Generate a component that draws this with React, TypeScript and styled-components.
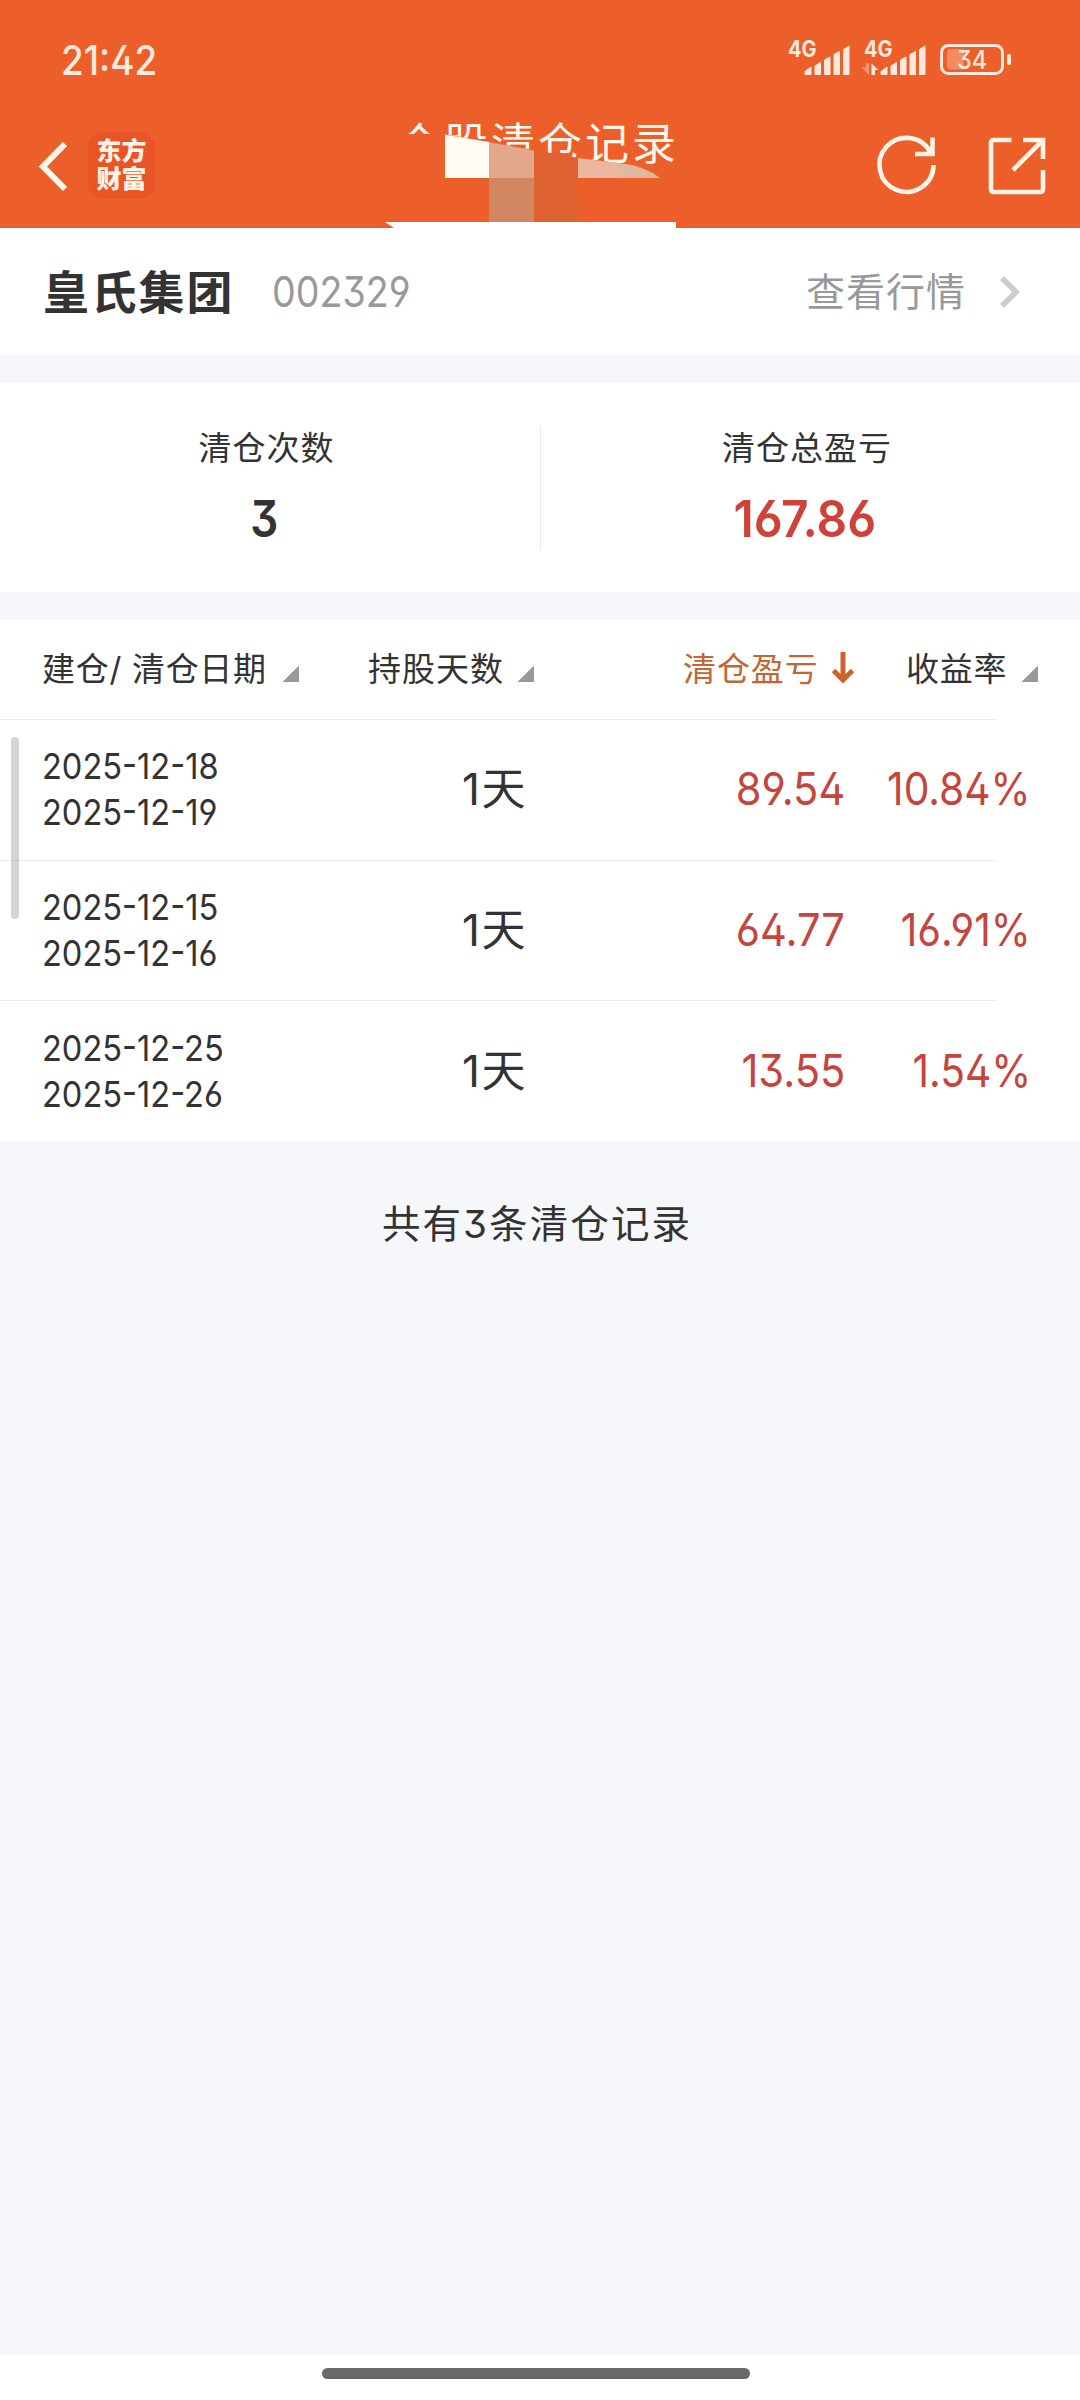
import React from 'react';
import styled, { createGlobalStyle } from 'styled-components';

const Global = createGlobalStyle`
  *, *::before, *::after { box-sizing: border-box; }
  html, body { margin: 0; padding: 0; background: #f6f7fa; }
  body { font-family: Inter, "Noto Sans CJK SC", sans-serif; color: #333; }
`;

const Screen = styled.main`
  width: 1080px;
  height: 2400px;
  display: flex;
  flex-direction: column;
  background: #f6f7fa;
  position: relative;
  overflow: hidden;
`;

/* Text with its own optical width: squeeze keeps the digits as narrow as the phone's typeface. */
const Txt = styled.span<{
  $size: number; $color?: string; $weight?: number; $gap?: number; $squeeze?: number; $origin?: string; $line?: number;
}>`
  display: inline-block;
  white-space: pre;
  font-size: ${p => p.$size}px;
  line-height: ${p => p.$line ?? 48}px;
  color: ${p => p.$color ?? '#333'};
  font-weight: ${p => p.$weight ?? 400};
  letter-spacing: ${p => p.$gap ?? 0}px;
  font-feature-settings: "ss01" 1, "cv09" 1;
  transform: scaleX(${p => p.$squeeze ?? 1});
  transform-origin: ${p => p.$origin ?? 'left'} center;
`;

const Top = styled.header`
  height: 228px;
  flex: none;
  background: #ec5f2b;
  position: relative;
`;

const StatusBar = styled.div`
  height: 104px;
  display: flex;
  justify-content: space-between;
  padding: 36px 68px 0 61px;
`;

const NavBar = styled.nav`
  height: 124px;
  display: flex;
  align-items: flex-start;
  padding: 28px 34px 0 39px;
`;

const Back = styled.svg`
  margin-top: 9px;
  flex: none;
`;

const Logo = styled.div`
  width: 67px;
  height: 67px;
  margin-left: 20px;
  padding-top: 5px;
  border-radius: 15px;
  background: #ea5527;
  color: #fff3e6;
  font-size: 25px;
  font-weight: 900;
  line-height: 28px;
  text-align: center;
`;

const Title = styled.h1`
  margin: -18px 0 0 242px;
  font-size: 44px;
  font-weight: 400;
  line-height: 60px;
  letter-spacing: 3px;
  color: #fff6ea;
  white-space: nowrap;
`;

const NavIcons = styled.svg`
  margin-left: auto;
  flex: none;
`;

const Mosaic = styled.svg`
  position: absolute;
  left: 380px;
  top: 120px;
`;

const StockRow = styled.section`
  height: 127px;
  flex: none;
  display: flex;
  align-items: center;
  padding: 0 59px 0 43px;
  background: #fff;
`;

const Code = styled.div`
  margin-left: 38px;
  flex: 1;
`;

const Chevron = styled.svg`
  margin-left: 33px;
`;

const Summary = styled.section`
  height: 209px;
  flex: none;
  margin-top: 28px;
  display: grid;
  grid-template-columns: 540px 1px 539px;
  align-items: center;
  background: #fff;
`;

const Stat = styled.div`
  height: 209px;
  padding: 41px 7px 0 0;
  display: flex;
  flex-direction: column;
  align-items: center;
  gap: 23px;
`;

const StatValue = styled.div`
  padding-right: 4px;
`;

const Divider = styled.div`
  height: 124px;
  background: #ebebeb;
`;

const Table = styled.section`
  margin-top: 28px;
  flex: none;
  background: #fff;
  position: relative;
`;

const HeadRow = styled.div`
  height: 99px;
  display: grid;
  grid-template-columns: 326px 315px 223px 174px;
  padding-left: 42px;
`;

const HeadCell = styled.div`
  display: flex;
  align-items: flex-start;
  padding-top: 25px;
`;

const Triangle = styled.i<{ $left: number }>`
  width: 16px;
  height: 16px;
  margin: 21px 0 0 ${p => p.$left}px;
  background: linear-gradient(135deg, transparent 50%, #999 50%);
`;

const Arrow = styled.svg`
  margin: 6px 0 0 13px;
`;

const Row = styled.div`
  height: 140.67px;
  display: grid;
  grid-template-columns: 369px 237px 248px minmax(0, 1fr);
  align-items: center;
  padding: 0 0 0 42px;
  background: linear-gradient(#ececec, #ececec) 0 0 / 996px 1px no-repeat;
`;

const Dates = styled.div`
  display: flex;
  flex-direction: column;
`;

const Days = styled.div`
  padding-left: 51px;
`;

const Amount = styled.div<{ $inset: number }>`
  display: flex;
  justify-content: flex-end;
  padding-right: ${p => p.$inset}px;
`;

const ScrollThumb = styled.div`
  position: absolute;
  left: 11px;
  top: 117px;
  width: 8px;
  height: 182px;
  border-radius: 4px;
  background: rgba(0, 0, 0, 0.17);
`;

const Total = styled.p`
  margin: 59px 0 0;
  padding-right: 6px;
  text-align: center;
`;

const HomeArea = styled.footer`
  height: 45px;
  margin-top: auto;
  padding-top: 13px;
  background: #fff;
`;

const HomePill = styled.div`
  width: 428px;
  height: 11px;
  margin-left: 322px;
  border-radius: 6px;
  background: #696969;
`;

const RED = '#c4453d';
const CREAM = '#ffe9dc';

const rows = [
  { open: '2025-12-18', close: '2025-12-19', profit: '89.54', rate: '10.84%' },
  { open: '2025-12-15', close: '2025-12-16', profit: '64.77', rate: '16.91%' },
  { open: '2025-12-25', close: '2025-12-26', profit: '13.55', rate: '1.54%' },
];

const Bars = ({ x }: { x: number }) => (
  <g fill={CREAM} stroke={CREAM} strokeWidth="1" strokeLinejoin="round">
    <path d={`M${x + 0.5} 38.500 v-3 l6 -4.500 v7.500z`} />
    <path d={`M${x + 10.5} 38.500 v-8.500 l5.500 -3.500 v12z`} />
    <path d={`M${x + 20} 38.500 v-14.500 l5.500 -3 v17.500z`} />
    <path d={`M${x + 29.5} 38.500 v-20 l5.500 -3 v23z`} />
    <path d={`M${x + 39} 38.500 v-25 l5.500 -3.500 v28.500z`} />
  </g>
);

const StatusIcons = () => (
  <svg width="226" height="48" viewBox="0 0 226 48" fontFamily="Inter, sans-serif">
    <text x="2" y="21" fontSize="22.500" fontWeight="700" fill={CREAM} textLength="28.500" lengthAdjust="spacingAndGlyphs">4G</text>
    <Bars x={18.5} />
    <text x="78" y="21" fontSize="22.500" fontWeight="700" fill={CREAM} textLength="28.500" lengthAdjust="spacingAndGlyphs">4G</text>
    <path d="M80 27.500 h3 v11.500 l-7.500 -7.500 h4.500z" fill="#f79a74" />
    <path d="M85.500 39 v-11.500 l7 6.500 h-3.500 v5z" fill={CREAM} />
    <Bars x={94.5} />
    <path d="M165 13 h13 v20.500 h-13 q-4 0 -4 -4 v-12.500 q0 -4 4 -4z" fill="#f48a62" />
    <rect x="155.500" y="9.500" width="61" height="28" rx="7" fill="none" stroke={CREAM} strokeWidth="3" />
    <rect x="221" y="18" width="4" height="11" rx="2" fill={CREAM} />
    <text x="171" y="33" fontSize="25.500" fontWeight="500" fill={CREAM} textLength="30" lengthAdjust="spacingAndGlyphs" style={{ fontFeatureSettings: '"cv09" 1' }}>34</text>
  </svg>
);

export default function App() {
  return (
    <Screen>
      <Global />
      <Top>
        <StatusBar>
          <Txt $size={41} $weight={500} $color={CREAM} $squeeze={0.9}>21:42</Txt>
          <StatusIcons />
        </StatusBar>
        <NavBar>
          <Back width="29" height="52" viewBox="0 0 29 52" fill="none" stroke="#fff6ea" strokeWidth="6">
            <path d="M26 3 L4 25.500 L26 48" />
          </Back>
          <Logo>东方<br />财富</Logo>
          <Title>个股清仓记录</Title>
          <NavIcons width="172" height="66" viewBox="874 132 172 66" fill="none" stroke="#fff4e6" strokeWidth="4.600">
            <path d="M933.500 165 A27 27 0 1 1 930.500 152.500" />
            <path d="M932.500 137.500 V154 H915" />
            <path d="M1011.500 140 H994 Q991 140 991 143 V189 Q991 192 994 192 H1040 Q1043 192 1043 189 V170" />
            <path d="M1023 140 H1043 V159 M1043 140 L1013 170" />
          </NavIcons>
        </NavBar>
        <Mosaic width="300" height="108" viewBox="380 120 300 108">
          <path d="M398 134 H445 L489 142 L534 150 L578 158 L622 163.500 Q645 166 660 178 H398z" fill="#ec5f2b" />
          <path d="M445 134.500 L489 142 V178 H445z" fill="#fffbf3" />
          <path d="M489 142 L534 150.500 V178 H489z" fill="#e1a88c" />
          <path d="M489 178 H534 V222 H489z" fill="#d28763" />
          <path d="M534 150.500 L578 158 V222 H534z" fill="#df6331" />
          <path d="M578 158 L622 163.500 V178 H578z" fill="#ebb69f" />
          <path d="M622 163.500 Q645 166 660 178 H622z" fill="#e0b8a0" />
          <path d="M385 222 H676 V228 H394z" fill="#fff" />
        </Mosaic>
      </Top>

      <StockRow>
        <Txt $size={46} $weight={700} $gap={1.8}>皇氏集团</Txt>
        <Code><Txt $size={42.5} $color="#999" $weight={400} $squeeze={0.885}>002329</Txt></Code>
        <Txt $size={39} $color="#999" $gap={1}>查看行情</Txt>
        <Chevron width="22" height="36" viewBox="0 0 22 36" fill="none" stroke="#ccc" strokeWidth="5.500">
          <path d="M3 4 L17 18 L3 32" />
        </Chevron>
      </StockRow>

      <Summary>
        <Stat>
          <Txt $size={33} $gap={1}>清仓次数</Txt>
          <StatValue><Txt $size={51} $weight={600} $squeeze={0.86} $origin="center">3</Txt></StatValue>
        </Stat>
        <Divider />
        <Stat>
          <Txt $size={33} $gap={1}>清仓总盈亏</Txt>
          <StatValue><Txt $size={51} $weight={600} $squeeze={0.94} $origin="center" $color="#cd433a">167.86</Txt></StatValue>
        </Stat>
      </Summary>

      <Table>
        <HeadRow>
          <HeadCell><Txt $size={33} $gap={0.7}>建仓/ 清仓日期</Txt><Triangle $left={16} /></HeadCell>
          <HeadCell><Txt $size={33} $gap={1}>持股天数</Txt><Triangle $left={14} /></HeadCell>
          <HeadCell>
            <Txt $size={33} $gap={0.9} $color="#c06734">清仓盈亏</Txt>
            <Arrow width="22" height="34" viewBox="0 0 22 34" fill="none" stroke="#cc622c" strokeWidth="5">
              <path d="M11 1 V29 M1.500 19.500 L11 29 L20.500 19.500" />
            </Arrow>
          </HeadCell>
          <HeadCell><Txt $size={33} $gap={0.8}>收益率</Txt><Triangle $left={15} /></HeadCell>
        </HeadRow>
        {rows.map(r => (
          <Row key={r.open}>
            <Dates>
              <Txt $size={36} $squeeze={0.905} $line={46}>{r.open}</Txt>
              <Txt $size={36} $squeeze={0.905} $line={46}>{r.close}</Txt>
            </Dates>
            <Days><Txt $size={44} $gap={1.5}>1天</Txt></Days>
            <Amount $inset={51}><Txt $size={45} $color={RED} $squeeze={0.925} $origin="right">{r.profit}</Txt></Amount>
            <Amount $inset={49}><Txt $size={45} $color={RED} $squeeze={0.905} $origin="right">{r.rate}</Txt></Amount>
          </Row>
        ))}
        <ScrollThumb />
      </Table>

      <Total><Txt $size={38.5} $gap={2.1}>共有3条清仓记录</Txt></Total>
      <HomeArea><HomePill /></HomeArea>
    </Screen>
  );
}
